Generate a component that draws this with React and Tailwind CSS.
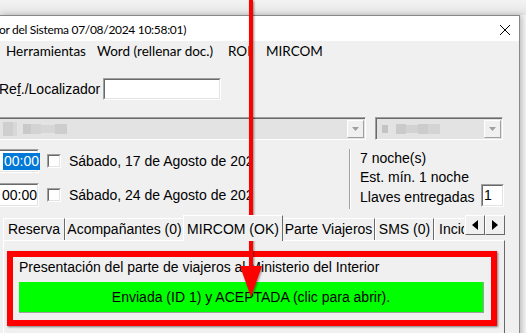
import React from "react";

const body = { fontFamily: '"Liberation Sans", Arial, sans-serif' };
const ui = { fontFamily: 'Lato, "Noto Sans", sans-serif' };

function Sunken({ className = "", children }) {
  return (
    <div
      className={`border-t border-l border-t-[#a0a0a0] border-l-[#a0a0a0] border-b border-r border-b-white border-r-white ${className}`}
    >
      <div className="h-full w-full border-t border-l border-t-[#696969] border-l-[#696969] border-b border-r border-b-[#e3e3e3] border-r-[#e3e3e3] bg-white">
        {children}
      </div>
    </div>
  );
}

function Blur({ blocks }) {
  return (
    <div className="flex items-center gap-0 h-full">
      {blocks.map((b, i) => (
        <div key={i} className={b} />
      ))}
    </div>
  );
}

function Combo({ className = "", blur }) {
  return (
    <div className={`border-t border-l border-t-[#a0a0a0] border-l-[#a0a0a0] border-b border-r border-b-white border-r-white ${className}`}>
      <div className="h-full flex border-t border-l border-t-[#696969] border-l-[#696969] bg-[#e3e3e3]">
        <div className="flex-1 px-[3px] py-[3px]">{blur}</div>
        <div className="w-[17px] m-[1px] bg-[#f0f0f0] border-t border-l border-white border-b border-r border-b-[#a0a0a0] border-r-[#a0a0a0] flex items-center justify-center">
          <svg width="7" height="4" viewBox="0 0 7 4"><path d="M0 0h7L3.5 4z" fill="#a0a0a0" /></svg>
        </div>
      </div>
    </div>
  );
}

function Check() {
  return (
    <div className="w-[14px] h-[14px] border-t border-l border-[#a0a0a0] border-b border-r border-b-white border-r-white">
      <div className="w-full h-full border-t border-l border-[#696969] border-b border-r border-b-[#e3e3e3] border-r-[#e3e3e3] bg-white" />
    </div>
  );
}

function Tab({ label, active, w }) {
  if (active) {
    return (
      <div
        className={`${w} h-[26px] -mb-px relative z-10 bg-[#f0f0f0] border-t border-l border-white border-r border-r-[#696969] flex items-start justify-center pt-[3px] text-[14px] text-black -mx-[1px]`}
      >
        {label}
      </div>
    );
  }
  return (
    <div
      className={`${w} h-[22px] bg-[#f0f0f0] border-t border-l border-white border-r border-r-[#696969] flex items-center justify-center text-[14px] text-black overflow-hidden whitespace-nowrap`}
    >
      {label}
    </div>
  );
}

function ScrollBtn({ dir }) {
  return (
    <div className="w-[20px] h-[20px] bg-[#f0f0f0] border-t border-l border-white border-b border-r border-b-[#696969] border-r-[#696969] flex items-center justify-center">
      <svg width="6" height="10" viewBox="0 0 6 10">
        {dir === "l" ? <path d="M6 0v10L0 5z" fill="#000" /> : <path d="M0 0v10L6 5z" fill="#000" />}
      </svg>
    </div>
  );
}

export default function App() {
  return (
    <div className="relative w-[526px] h-[333px] overflow-hidden bg-gradient-to-r from-[#ececec] to-[#f6f6f6]" style={body}>
      <div className="h-[15px] bg-gradient-to-b from-[#f3f3f3] to-[#e6e6e6]" />
      <div className="flex">
        <div className="w-[520px] border-t border-r border-[#888888] bg-[#f0f0f0] shadow-[2px_0_6px_rgba(0,0,0,0.25)]">
          {/* title bar */}
          <div className="h-[25px] bg-white flex items-center justify-between pr-[8px] pt-[2px] text-[12px] tracking-[-0.3px] text-black" style={ui}>
            <span className="-ml-[1px]">or del Sistema 07/08/2024 10:58:01)</span>
            <svg width="12" height="12" viewBox="0 0 12 12"><path d="M1 1l10 10M11 1L1 11" stroke="#000" strokeWidth="1" /></svg>
          </div>
          {/* menu */}
          <div className="h-[21px] flex items-center text-[13.5px] text-black" style={ui}>
            <span className="ml-[6px] w-[91px]">Herramientas</span>
            <span className="w-[131px]">Word (rellenar doc.)</span>
            <span className="w-[38px]">ROI</span>
            <span>MIRCOM</span>
          </div>
          {/* ref row */}
          <div className="mt-[16px] h-[22px] flex items-center text-[14px]">
            <span className="-ml-[1px] w-[104px] whitespace-nowrap">
              Re<span className="underline">f</span>./Localizador
            </span>
            <Sunken className="w-[118px] h-[22px]" />
          </div>
          {/* combo row */}
          <div className="mt-[17px] flex">
            <Combo
              className="-ml-[10px] w-[376px] h-[23px]"
              blur={
                <Blur
                  blocks={[
                    "w-[10px] h-[14px] ml-[8px] bg-[#cfcfcf]",
                    "w-[4px] h-[14px] bg-[#d8d8d8]",
                    "w-[8px] h-[10px] ml-[6px] bg-[#c9c9c9]",
                    "w-[10px] h-[10px] bg-[#d3d3d3]",
                    "w-[14px] h-[8px] bg-[#d6d6d6]",
                    "w-[12px] h-[10px] bg-[#cdcdcd]",
                  ]}
                />
              }
            />
            <Combo
              className="ml-[9px] w-[128px] h-[23px]"
              blur={
                <Blur
                  blocks={[
                    "w-[6px] h-[8px] ml-[2px] bg-[#c4c4c4]",
                    "w-[10px] h-[10px] ml-[8px] bg-[#cacaca]",
                    "w-[12px] h-[8px] bg-[#d2d2d2]",
                    "w-[10px] h-[10px] bg-[#cccccc]",
                    "w-[12px] h-[10px] bg-[#d4d4d4]",
                  ]}
                />
              }
            />
          </div>
          {/* dates + info */}
          <div className="mt-[9px] flex h-[60px]">
            <div className="w-[349px] flex flex-col">
              <div className="h-[24px] flex items-center text-[14px]">
                <Sunken className="-ml-[3px] w-[42px] h-[24px]">
                  <div className="h-full flex items-center pl-[4px]">
                    <span className="bg-[#0078d7] text-white leading-[17px] px-[1px]">00:00</span>
                  </div>
                </Sunken>
                <div className="ml-[8px]"><Check /></div>
                <span className="ml-[8px] w-[182px] overflow-hidden whitespace-nowrap">Sábado, 17 de Agosto de 2024</span>
              </div>
              <div className="mt-[10px] h-[24px] flex items-center text-[14px]">
                <Sunken className="-ml-[3px] w-[42px] h-[24px]">
                  <div className="h-full flex items-center pl-[3px]">00:00</div>
                </Sunken>
                <div className="ml-[8px]"><Check /></div>
                <span className="ml-[8px] w-[182px] overflow-hidden whitespace-nowrap">Sábado, 24 de Agosto de 2024</span>
              </div>
            </div>
            <div className="flex-1 border-l border-l-[#a0a0a0] text-[14px] leading-[19px]">
              <div className="shadow-[inset_1px_0_0_white] pl-[10px] h-full">
                <div>7 noche(s)</div>
                <div>Est. mín. 1 noche</div>
                <div className="flex items-center">
                  <span className="w-[121px]">Llaves entregadas</span>
                  <Sunken className="w-[23px] h-[23px] -mt-[3px]">
                    <div className="pl-[1px] leading-[19px]">1</div>
                  </Sunken>
                </div>
              </div>
            </div>
          </div>
          {/* tabs */}
          <div className="mt-[6px] ml-[3px] w-[502px] flex items-end h-[25px] relative">
            <Tab label="Reserva" w="w-[62px]" />
            <Tab label="Acompañantes (0)" w="w-[119px]" />
            <Tab label="MIRCOM (OK)" w="w-[100px]" active />
            <Tab label="Parte Viajeros" w="w-[93px]" />
            <Tab label="SMS (0)" w="w-[59px]" />
            <div className="w-[30px] h-[22px] border-t border-l border-white flex items-center pl-[4px] overflow-hidden text-[14px] whitespace-nowrap">Incid</div>
            <div className="absolute right-0 top-0 flex">
              <ScrollBtn dir="l" />
              <ScrollBtn dir="r" />
            </div>
          </div>
          {/* panel */}
          <div className="ml-[3px] w-[502px] h-[120px] border-t border-l border-white border-r border-r-[#696969] pt-[10px] px-[3px]">
            <div className="w-[490px] border-[6px] border-[#ff0000] pl-[6px] pb-[7px] shadow-[1px_1px_2px_rgba(0,0,0,0.5)]">
              <div className="text-[14px] leading-[20px]">Presentación del parte de viajeros al Ministerio del Interior</div>
              <div className="mt-[5px] w-[465px] h-[31px] bg-[#00ff00] border-r border-b border-r-[#a0a0a0] border-b-[#a0a0a0] flex items-center justify-center text-[14px]">
                Enviada (ID 1) y ACEPTADA (clic para abrir).
              </div>
            </div>
          </div>
        </div>
      </div>
      {/* red arrow overlay */}
      <svg className="absolute left-0 top-0 pointer-events-none" width="526" height="333" viewBox="0 0 526 333">
        <defs>
          <filter id="sh" x="-20%" y="-20%" width="140%" height="140%">
            <feDropShadow dx="1" dy="1" stdDeviation="0.8" floodColor="#000" floodOpacity="0.45" />
          </filter>
        </defs>
        <g filter="url(#sh)">
          <rect x="249" y="0" width="4" height="270" fill="#ff0000" />
          <path d="M240 266h22l-11 31z" fill="#ff0000" />
        </g>
      </svg>
    </div>
  );
}
